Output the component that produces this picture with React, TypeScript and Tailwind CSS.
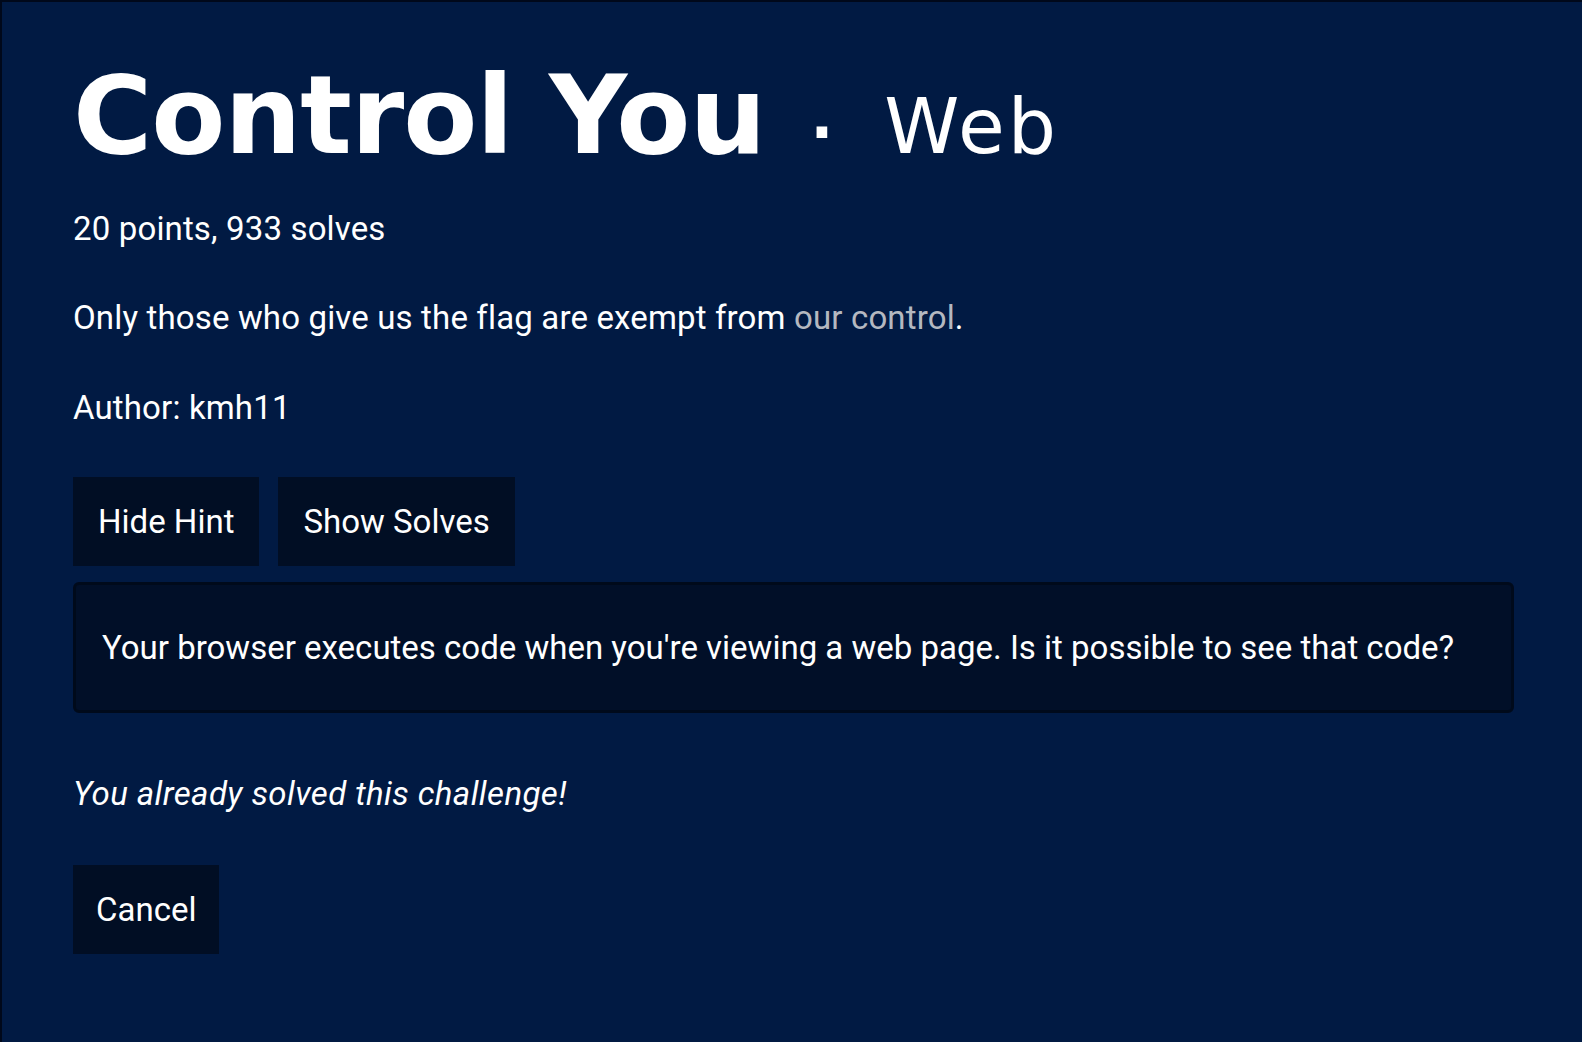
import * as React from "react";

const BODY_FONT = "font-['Roboto','Liberation_Sans',sans-serif]";
const TITLE_FONT = "font-['DejaVu_Sans','Liberation_Sans',sans-serif]";

function DarkButton({ label, narrow }: { label: string; narrow?: boolean }) {
  return (
    <button
      className={`flex h-[89px] items-center bg-[#010e24] text-[33px] leading-[48px] text-white ${
        narrow ? "px-[23px]" : "px-[25px]"
      }`}
    >
      {label}
    </button>
  );
}

export default function App() {
  const [showHint, setShowHint] = React.useState(true);

  return (
    <div className={`min-h-[1042px] border-l-2 border-t-2 border-[#00081a] bg-[#011a43] text-white ${BODY_FONT}`}>
      <div className="flex flex-col pl-[71px] pr-[68px]">
        <h1 className={`mt-[60px] flex items-baseline leading-[108px] ${TITLE_FONT}`}>
          <span className="text-[108px] font-bold tracking-[-1px]">Control You</span>
          <span className="ml-[45px] mr-[51px] text-[60px] font-bold">·</span>
          <span className="text-[76px] font-normal tracking-[3px]">Web</span>
        </h1>

        <p className="mt-[19px] text-[33px] leading-[48px] tracking-[0.15px]">20 points, 933 solves</p>
        <p className="mt-[41px] text-[33px] leading-[48px] tracking-[0.15px]">
          Only those who give us the flag are exempt from{" "}
          <a className="text-[#b4b8c0]">our control</a>.
        </p>
        <p className="mt-[42px] text-[33px] leading-[48px] tracking-[0.15px]">Author: kmh11</p>

        <div className="mt-[45px] flex gap-[19px]">
          <div onClick={() => setShowHint(!showHint)}>
            <DarkButton label={showHint ? "Hide Hint" : "Show Hint"} />
          </div>
          <DarkButton label="Show Solves" />
        </div>

        {showHint ? (
          <div className="mt-[16px] flex h-[131px] items-center rounded-[6px] border-[3px] border-[#000a1b] bg-[#010f28] px-[26px] text-[33px] leading-[48px]">
            Your browser executes code when you're viewing a web page. Is it possible to see that code?
          </div>
        ) : null}

        <p className="mt-[57px] text-[33px] italic leading-[48px] tracking-[0.4px]">You already solved this challenge!</p>

        <div className="mt-[47px] flex">
          <DarkButton label="Cancel" narrow />
        </div>
      </div>
    </div>
  );
}
